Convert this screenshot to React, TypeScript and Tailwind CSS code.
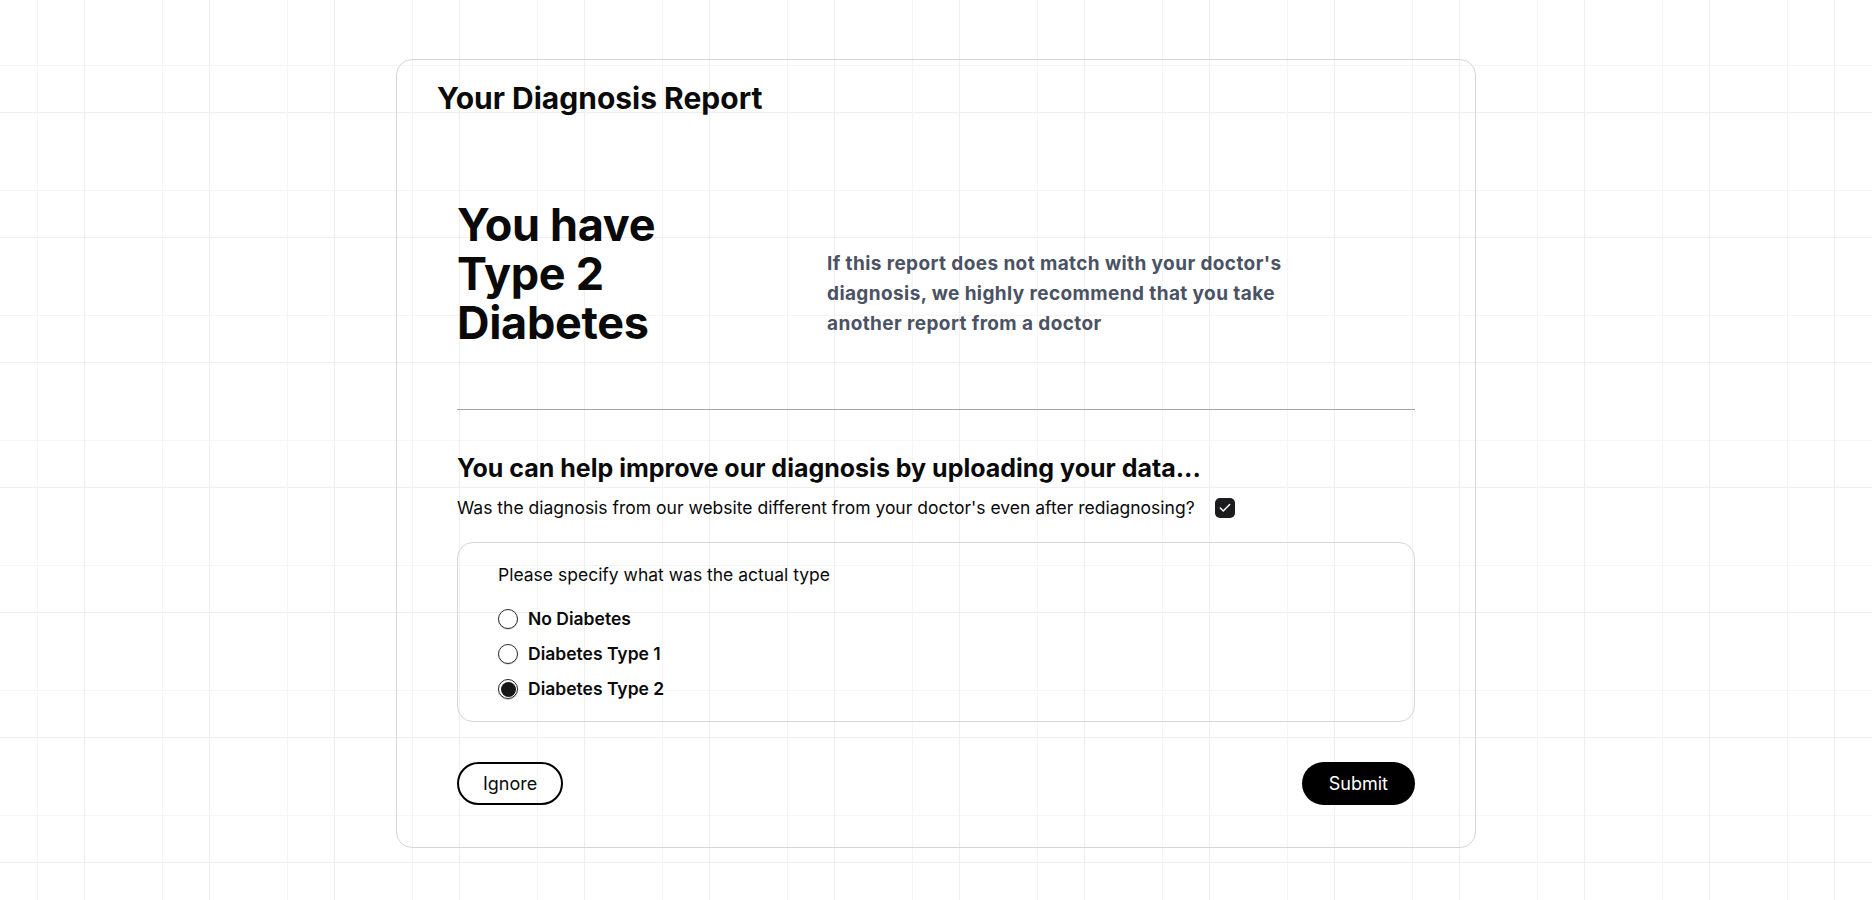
import { Check } from "lucide-react";

const options = ["No Diabetes", "Diabetes Type 1", "Diabetes Type 2"];

function Radio({ checked }: { checked: boolean }) {
  return checked ? (
    <span className="w-5 h-5 rounded-full bg-white border-[1.5px] border-[#2a2a2a] shadow-[0_1px_1px_rgba(0,0,0,0.25)] shrink-0 flex items-center justify-center">
      <span className="w-[15px] h-[15px] rounded-full bg-[#161616]" />
    </span>
  ) : (
    <span className="w-5 h-5 rounded-full bg-white border-[1.5px] border-[#2a2a2a] shadow-[0_1px_1px_rgba(0,0,0,0.15)] shrink-0" />
  );
}

export default function App() {
  const selected = "Diabetes Type 2";

  return (
    <div className="min-h-screen w-full bg-white font-[Inter,sans-serif] text-[#0a0a0a] bg-[linear-gradient(to_right,transparent_37px,#f5f5f7_37px,#f5f5f7_38px,transparent_38px,transparent_84px,#efeff1_84px,#efeff1_85px,transparent_85px),linear-gradient(to_bottom,transparent_65px,#f5f5f7_65px,#f5f5f7_66px,transparent_66px,transparent_112px,#efeff1_112px,#efeff1_113px,transparent_113px)] bg-size-[125px_125px] flex justify-center pt-[59px] pb-[52px]">
      <div className="w-[1080px] border border-[#d6d6da] rounded-2xl pt-5 pb-10">
        <h1 className="px-10 text-3xl leading-9 font-bold">Your Diagnosis Report</h1>

        <div className="px-15">
          {/* Result */}
          <div className="flex items-start mt-[84px]">
            <h2 className="w-[260px] shrink-0 text-[45px] leading-[49px] font-bold tracking-[-0.3px]">
              You have Type 2 Diabetes
            </h2>
            <p className="ml-[110px] mt-[49px] w-[485px] text-[19px] leading-[30px] tracking-[0.4px] font-bold text-[#4a5263]">
              If this report does not match with your doctor's diagnosis, we highly recommend that you take another report from a doctor
            </p>
          </div>

          <div className="mt-[62px] border-t border-[#a3a3a8]" />

          {/* Feedback */}
          <h3 className="mt-[42px] text-[25px] leading-8 font-bold">
            You can help improve our diagnosis by uploading your data...
          </h3>
          <div className="mt-2.5 flex items-center gap-5">
            <span className="text-[17.5px] leading-7">
              Was the diagnosis from our website different from your doctor's even after rediagnosing?
            </span>
            <span className="w-5 h-5 rounded-[5px] bg-[#1c1c1e] flex items-center justify-center">
              <Check className="w-3.5 h-3.5 text-white" strokeWidth={2.5} />
            </span>
          </div>

          <div className="mt-5 border border-[#d6d6da] rounded-2xl px-10 pt-5 pb-5">
            <p className="text-[17.5px] leading-6">Please specify what was the actual type</p>
            <div className="mt-5 flex flex-col gap-[11px]">
              {options.map((o) => (
                <label key={o} className="flex items-center gap-2.5 h-6">
                  <Radio checked={o === selected} />
                  <span className="text-[17.5px] font-semibold">{o}</span>
                </label>
              ))}
            </div>
          </div>

          <div className="mt-10 flex items-center justify-between">
            <button type="button" className="h-[43px] px-6 rounded-full border-2 border-black text-lg">
              Ignore
            </button>
            <button type="button" className="h-[43px] px-[27px] rounded-full bg-black text-white text-lg">
              Submit
            </button>
          </div>
        </div>
      </div>
    </div>
  );
}
